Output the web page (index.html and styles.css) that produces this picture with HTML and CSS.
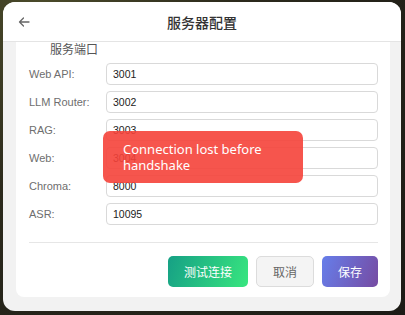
FILE: index.html
```html
<!DOCTYPE html>
<html lang="zh-CN">
<head>
<meta charset="utf-8">
<title>服务器配置</title>
<link rel="stylesheet" href="styles.css">
</head>
<body>
<div class="dialog">
  <div class="header">
    <span class="back">
      <svg width="12" height="10" viewBox="0 0 12 10" aria-hidden="true"><path d="M11 5H1.5M5.5 1L1.5 5L5.5 9" fill="none" stroke="#666" stroke-width="1.3" stroke-linecap="round" stroke-linejoin="round"/></svg>
    </span>
    <h1 class="title">服务器配置</h1>
    <span class="spacer"></span>
  </div>
  <div class="body">
    <div class="card">
      <div class="section-title">服务端口</div>
      <div class="form">
        <div class="row"><span class="label">Web API:</span><input class="input" value="3001"></div>
        <div class="row"><span class="label">LLM Router:</span><input class="input" value="3002"></div>
        <div class="row"><span class="label">RAG:</span><input class="input" value="3003"></div>
        <div class="row"><span class="label">Web:</span><input class="input" value="3004"></div>
        <div class="row"><span class="label">Chroma:</span><input class="input" value="8000"></div>
        <div class="row"><span class="label">ASR:</span><input class="input" value="10095"></div>
      </div>
      <div class="divider"></div>
      <div class="actions">
        <button class="btn btn-test">测试连接</button>
        <button class="btn btn-cancel">取消</button>
        <button class="btn btn-save">保存</button>
      </div>
    </div>
  </div>
  <div class="toast">Connection lost before handshake</div>
</div>
</body>
</html>
```
FILE: styles.css
```css
* { box-sizing: border-box; }
html, body { margin: 0; padding: 0; }
body {
  width: 405px;
  height: 315px;
  overflow: hidden;
  background: radial-gradient(circle at 10% 0%, #4a4a2a 0%, #2c2a1c 40%, #1c1b16 100%);
  font-family: "Liberation Sans", "Noto Sans CJK SC", sans-serif;
  padding: 2px 4px 4px 3px;
}
.dialog {
  position: relative;
  width: 398px;
  height: 309px;
  border-radius: 12px;
  overflow: hidden;
  background: #f2f2f2;
  display: flex;
  flex-direction: column;
}
.header {
  height: 40px;
  flex: none;
  background: #fff;
  border-bottom: 1px solid #e4e4e4;
  display: grid;
  grid-template-columns: 40px 1fr 40px;
  align-items: center;
}
.back {
  display: flex;
  justify-content: center;
  padding-left: 2px;
  padding-top: 1px;
}
.title {
  margin: 0;
  text-align: center;
  font-size: 14px;
  font-weight: 500;
  color: #333;
  font-family: "Noto Sans CJK SC", sans-serif;
  padding-top: 1px;
}
.body {
  flex: 1;
  padding: 0 11px 14px 13px;
  overflow: hidden;
}
.card {
  background: #fff;
  border-radius: 0 0 8px 8px;
  padding: 0 12px 10px 13px;
}
.section-title {
  font-family: "Noto Sans CJK SC", sans-serif;
  font-size: 12px;
  line-height: 14px;
  color: #555;
  padding-left: 21px;
}
.form {
  display: flex;
  flex-direction: column;
  gap: 6px;
  margin-top: 7px;
}
.row {
  display: flex;
  align-items: center;
  height: 22px;
}
.label {
  width: 77px;
  flex: none;
  font-size: 11px;
  color: #6e6e6e;
}
.input {
  flex: 1;
  height: 22px;
  border: 1px solid #d9d9d9;
  border-radius: 4px;
  padding: 0 6px;
  font-family: "Liberation Sans", sans-serif;
  font-size: 10.5px;
  color: #222;
  background: #fff;
  outline: none;
}
.divider {
  height: 1px;
  background: #e6e6e6;
  margin-top: 17px;
}
.actions {
  display: flex;
  justify-content: flex-end;
  gap: 8px;
  margin-top: 13px;
}
.btn {
  height: 31px;
  padding: 0 16px;
  border: none;
  border-radius: 5px;
  font-family: "Noto Sans CJK SC", sans-serif;
  font-size: 12px;
  color: #fff;
}
.btn-test {
  background: linear-gradient(110deg, #16a085 0%, #38e67f 100%);
}
.btn-cancel {
  background: #f4f4f4;
  border: 1px solid #dcdcdc;
  color: #666;
}
.btn-save {
  background: linear-gradient(110deg, #667eea 0%, #764ba2 100%);
}
.toast {
  position: absolute;
  left: 100px;
  top: 129px;
  width: 200px;
  height: 52px;
  padding: 10px 20px;
  border-radius: 7px;
  background: rgba(245, 66, 58, 0.9);
  color: #fff;
  font-family: "Noto Sans", sans-serif;
  font-size: 13px;
  line-height: 16px;
}
```
